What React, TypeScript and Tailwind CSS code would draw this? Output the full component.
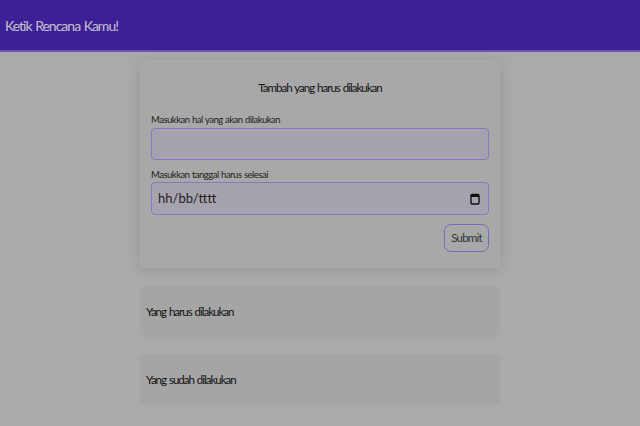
import React from 'react';

export default function App() {
  return (
    <div className="min-h-screen bg-[#aaaaaa] font-['Lato','Open_Sans',sans-serif] text-[#111]">
      {/* Header */}
      <header className="h-[52px] bg-[#3e2096] border-b-2 border-b-[#6a55b0] flex items-center px-[5px]">
        <h1 className="text-[14px] tracking-[-1px] [word-spacing:1px] text-[#c4c0cc]">Ketik Rencana Kamu!</h1>
      </header>

      <main className="w-[360px] mx-auto pt-[8px]">
        {/* Form */}
        <form className="bg-[#a8a8a8] rounded-[6px] shadow-[0_2px_14px_rgba(0,0,0,0.12)] px-[11px] pt-[18px] pb-[16px]">
          <h2 className="text-center text-[11.5px] leading-[19px] tracking-[-1px] [word-spacing:1px] mb-[17px]">Tambah yang harus dilakukan</h2>

          <label className="block text-[9.5px] leading-[12px] tracking-[-0.5px] [word-spacing:0.5px] text-[#222] mb-[2px]">Masukkan hal yang akan dilakukan</label>
          <input
            type="text"
            className="block w-full h-[32px] rounded-[4px] border border-[#8878c4] bg-[#a7a3ae] outline-none px-2 text-[13px]"
          />

          <label className="block text-[9.5px] leading-[12px] tracking-[-0.5px] [word-spacing:0.5px] text-[#222] mt-[9px] mb-[1px]">Masukkan tanggal harus selesai</label>
          <div className="flex items-center justify-between w-full h-[33px] rounded-[4px] border border-[#8878c4] bg-[#a7a3ae] px-[6px]">
            <span className="text-[13px] text-[#222]">hh/bb/tttt</span>
            <svg width="10" height="12" viewBox="0 0 10 12" className="mr-[2px]">
              <rect x="1" y="1.5" width="8" height="9.5" rx="1" fill="none" stroke="#111" strokeWidth="1.4" />
              <rect x="1" y="1.5" width="8" height="2.5" fill="#111" />
            </svg>
          </div>

          <div className="flex justify-end mt-[9px]">
            <button
              type="button"
              className="h-[28px] w-[45px] rounded-[7px] border border-[#7a68c0] bg-[#a8a8a8] text-[11.5px] tracking-[-0.8px] text-[#333]"
            >
              Submit
            </button>
          </div>
        </form>

        {/* Lists */}
        <section className="mt-[18px] bg-[#a5a5a5] rounded-[4px] h-[51px] flex items-center px-[6px]">
          <h3 className="text-[11.5px] tracking-[-1px] [word-spacing:1px]">Yang harus dilakukan</h3>
        </section>
        <section className="mt-[17px] bg-[#a5a5a5] rounded-[4px] h-[51px] flex items-center px-[6px]">
          <h3 className="text-[11.5px] tracking-[-1px] [word-spacing:1px]">Yang sudah dilakukan</h3>
        </section>
      </main>
    </div>
  );
}
